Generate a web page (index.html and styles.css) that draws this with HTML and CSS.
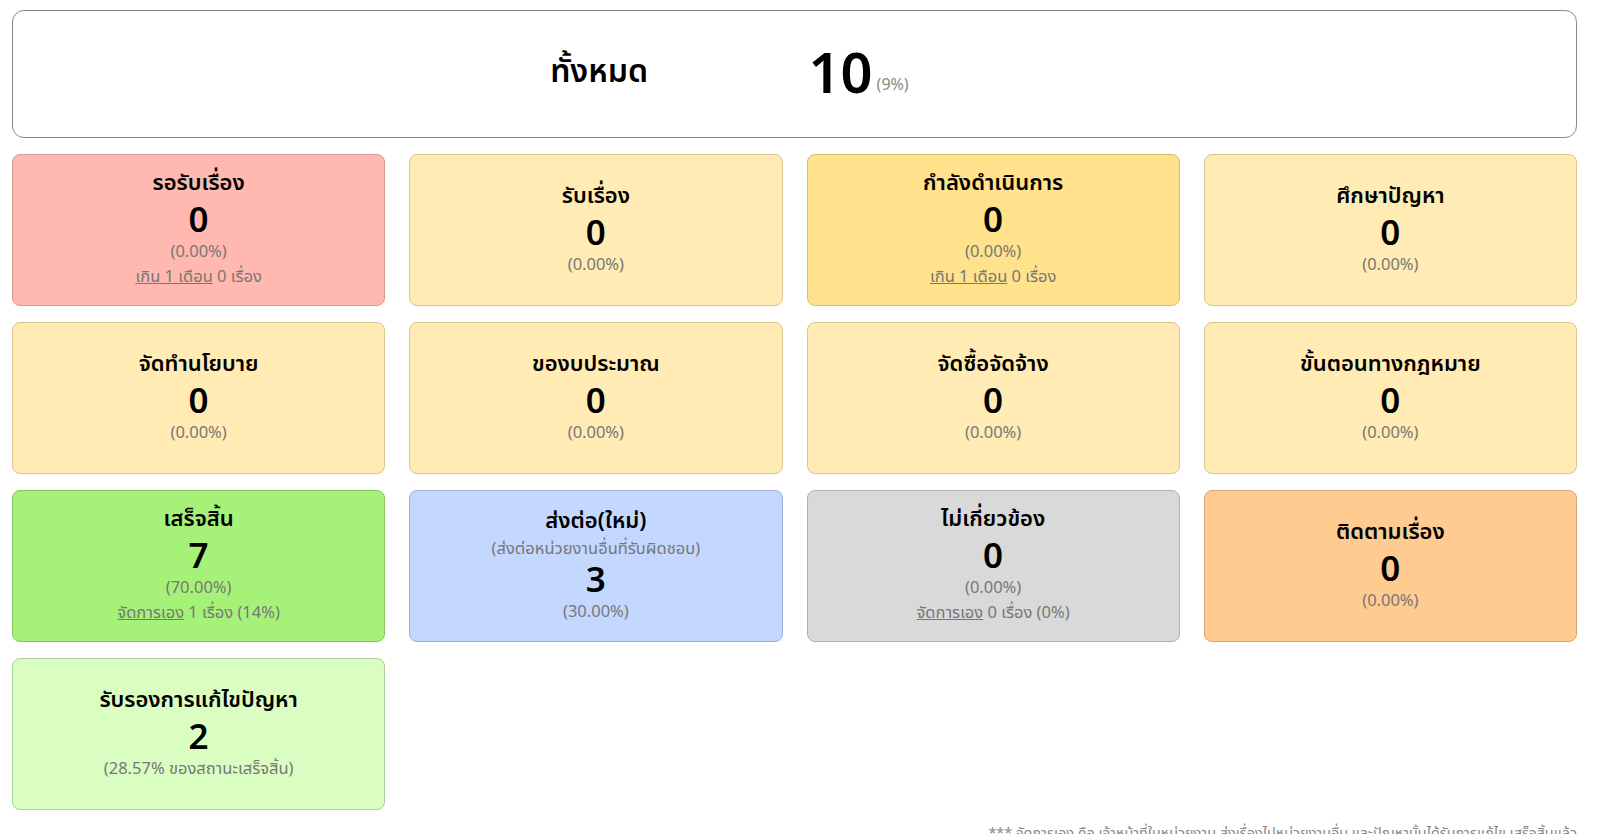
FILE: index.html
```html
<!DOCTYPE html>
<html lang="th">

<head>
    <title>สรุปสถานะเรื่อง</title>
    <meta charset="UTF-8">
    <link rel="stylesheet" href="styles.css">
</head>

<body>
    <div class="page">
        <div class="total">
            <div class="total-label">ทั้งหมด</div>
            <div class="total-value">10<small>(9%)</small></div>
        </div>

        <div class="cards">
            <div class="card pink">
                <div class="name">รอรับเรื่อง</div>
                <div class="count">0</div>
                <div class="pct">(0.00%)</div>
                <div class="pct"><a href="#">เกิน 1 เดือน</a> 0 เรื่อง</div>
            </div>
            <div class="card cream">
                <div class="name">รับเรื่อง</div>
                <div class="count">0</div>
                <div class="pct">(0.00%)</div>
            </div>
            <div class="card gold">
                <div class="name">กำลังดำเนินการ</div>
                <div class="count">0</div>
                <div class="pct">(0.00%)</div>
                <div class="pct"><a href="#">เกิน 1 เดือน</a> 0 เรื่อง</div>
            </div>
            <div class="card cream">
                <div class="name">ศึกษาปัญหา</div>
                <div class="count">0</div>
                <div class="pct">(0.00%)</div>
            </div>

            <div class="card cream">
                <div class="name">จัดทำนโยบาย</div>
                <div class="count">0</div>
                <div class="pct">(0.00%)</div>
            </div>
            <div class="card cream">
                <div class="name">ของบประมาณ</div>
                <div class="count">0</div>
                <div class="pct">(0.00%)</div>
            </div>
            <div class="card cream">
                <div class="name">จัดซื้อจัดจ้าง</div>
                <div class="count">0</div>
                <div class="pct">(0.00%)</div>
            </div>
            <div class="card cream">
                <div class="name">ขั้นตอนทางกฎหมาย</div>
                <div class="count">0</div>
                <div class="pct">(0.00%)</div>
            </div>

            <div class="card green">
                <div class="name">เสร็จสิ้น</div>
                <div class="count">7</div>
                <div class="pct">(70.00%)</div>
                <div class="pct"><a href="#">จัดการเอง</a> 1 เรื่อง (14%)</div>
            </div>
            <div class="card blue">
                <div class="name">ส่งต่อ(ใหม่)</div>
                <div class="note">(ส่งต่อหน่วยงานอื่นที่รับผิดชอบ)</div>
                <div class="count">3</div>
                <div class="pct">(30.00%)</div>
            </div>
            <div class="card grey">
                <div class="name">ไม่เกี่ยวข้อง</div>
                <div class="count">0</div>
                <div class="pct">(0.00%)</div>
                <div class="pct"><a href="#">จัดการเอง</a> 0 เรื่อง (0%)</div>
            </div>
            <div class="card orange">
                <div class="name">ติดตามเรื่อง</div>
                <div class="count">0</div>
                <div class="pct">(0.00%)</div>
            </div>

            <div class="card lime">
                <div class="name">รับรองการแก้ไขปัญหา</div>
                <div class="count">2</div>
                <div class="pct">(28.57% ของสถานะเสร็จสิ้น)</div>
            </div>
        </div>

        <p class="footnote">*** จัดการเอง คือ เจ้าหน้าที่ในหน่วยงาน ส่งเรื่องไปหน่วยงานอื่น และปัญหานั้นได้รับการแก้ไข เสร็จสิ้นแล้ว</p>
    </div>
</body>

</html>
```

FILE: styles.css
```css
body {
    margin: 0;
    color: #000;
    font-family: "Noto Sans", "Noto Sans Thai", sans-serif;
}

.page {
    padding: 10px 41px 0 12px;
}

/* summary box */
.total {
    display: grid;
    grid-template-columns: repeat(4, 1fr);
    align-items: center;
    height: 128px;
    box-sizing: border-box;
    padding-bottom: 6px;
    border: 1px solid #888;
    border-radius: 12px;
}

.total-label {
    grid-column: 2;
    text-align: center;
    font-size: 32px;
    font-weight: 600;
    margin-top: 2px;
}

.total-value {
    padding-left: 14px;
    font-size: 56px;
    font-weight: 600;
    line-height: 1;
}

.total-value small {
    margin-left: 4px;
    font-size: 16px;
    font-weight: 400;
    color: #888;
    vertical-align: 3px;
}

/* status cards */
.cards {
    display: grid;
    grid-template-columns: repeat(4, 1fr);
    gap: 16px 24px;
    margin-top: 16px;
}

.card {
    height: 152px;
    box-sizing: border-box;
    padding-bottom: 8px;
    display: flex;
    flex-direction: column;
    justify-content: center;
    text-align: center;
    border: 1px solid;
    border-radius: 8px;
}

.name {
    font-size: 22px;
    font-weight: 600;
    line-height: 35px;
}

.count {
    font-size: 35px;
    font-weight: 600;
    line-height: 39px;
}

.pct, .note {
    font-size: 16.5px;
    line-height: 25px;
    color: #777;
}

.note {
    line-height: 22px;
}

.pct a {
    color: #777;
}

.pink   { background: #ffb9b1; border-color: #d79a93; }
.cream  { background: #ffebb3; border-color: #d8c592; }
.gold   { background: #ffe28b; border-color: #d8bd6e; }
.green  { background: #a6f177; border-color: #87c561; }
.blue   { background: #c3d7ff; border-color: #a0b1d3; }
.grey   { background: #d9d9d9; border-color: #b0b0b0; }
.orange { background: #ffcb91; border-color: #d4a876; }
.lime   { background: #dafec1; border-color: #aed19a; }

.footnote {
    margin: 13px 0 0;
    text-align: right;
    font-size: 14.4px;
    color: #888;
}
```
